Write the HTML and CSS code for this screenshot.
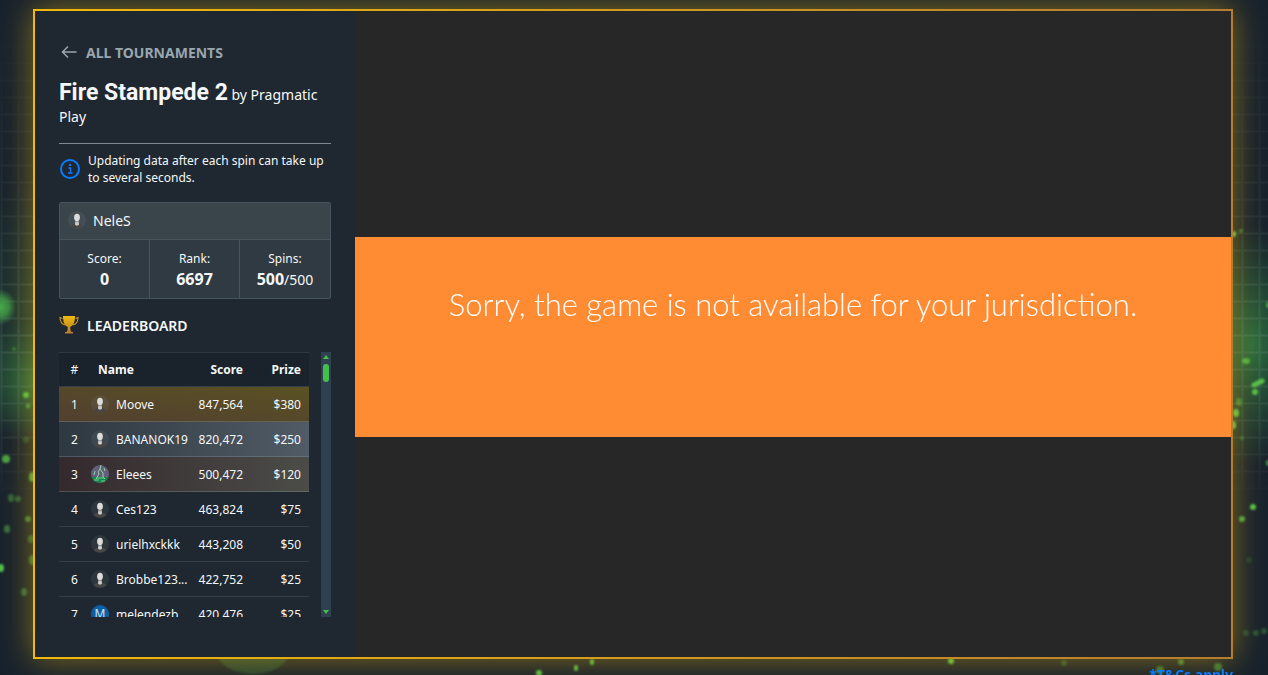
FILE: index.html
```html
<!DOCTYPE html>
<html lang="en">
<head>
    <meta charset="UTF-8">
    <title>Fire Stampede 2</title>
    <link rel="stylesheet" href="styles.css">
</head>
<body>
    <!-- shared icons -->
    <svg class="sprite" aria-hidden="true">
        <symbol id="user" viewBox="0 0 18 18">
            <circle cx="9" cy="9" r="9" fill="#8a929a" fill-opacity=".13"/>
            <path d="M2.6 15.2C4 13.3 6 12.6 9 12.6s5 .7 6.400 2.600A9 9 0 0 1 2.600 15.200z" fill="#484644"/>
            <path d="M7.300 10.200h3.400l.3 3.300-1 .9H8l-1-.9z" fill="#cfcfcf"/>
            <ellipse cx="9" cy="6.400" rx="2.900" ry="3.600" fill="#dcdcdc"/>
            <path d="M7.200 10.800h3.600" stroke="#8d8d8d" stroke-width=".8"/>
        </symbol>
    </svg>

    <!-- page backdrop -->
    <svg class="backdrop" viewBox="0 0 1268 675" preserveAspectRatio="none" aria-hidden="true">
        <defs>
            <pattern id="grid" width="17" height="17" patternUnits="userSpaceOnUse" y="11">
                <path d="M1.500 0v17M0 1.500h17" stroke="#7f9a94" stroke-opacity=".2" stroke-width="2"/>
            </pattern>
            <linearGradient id="fade" x1="0" y1="0" x2="0" y2="1">
                <stop offset="0" stop-color="#000"/>
                <stop offset=".3" stop-color="#777"/>
                <stop offset=".5" stop-color="#fff"/>
                <stop offset=".64" stop-color="#aaa"/>
                <stop offset=".75" stop-color="#000"/>
            </linearGradient>
            <mask id="gridMask"><rect width="1268" height="675" fill="url(#fade)"/></mask>
            <radialGradient id="green">
                <stop offset="0" stop-color="#37a04a" stop-opacity=".6"/>
                <stop offset=".5" stop-color="#2f8245" stop-opacity=".35"/>
                <stop offset="1" stop-color="#2f8245" stop-opacity="0"/>
            </radialGradient>
            <radialGradient id="orb">
                <stop offset="0" stop-color="#45a84a"/>
                <stop offset=".5" stop-color="#3f9c48" stop-opacity=".8"/>
                <stop offset="1" stop-color="#3f9c48" stop-opacity="0"/>
            </radialGradient>
            <filter id="soft" x="-20%" y="-20%" width="140%" height="140%"><feGaussianBlur stdDeviation="1"/></filter>
        </defs>
        <rect width="1268" height="675" fill="#18222d"/>
        <ellipse cx="40" cy="382" rx="70" ry="62" fill="url(#green)"/>
        <ellipse cx="25" cy="310" rx="60" ry="130" fill="url(#green)" opacity=".3"/>
        <ellipse cx="1252" cy="345" rx="70" ry="120" fill="url(#green)"/>
        <rect width="1268" height="675" fill="url(#grid)" mask="url(#gridMask)"/>
        <ellipse cx="1" cy="307" rx="15" ry="18" fill="url(#orb)"/>
        <g fill="#55c24a" filter="url(#soft)">
            <ellipse cx="26" cy="395" rx="3" ry="3"/>
            <ellipse cx="28" cy="406" rx="2" ry="2" opacity=".8"/>
            <ellipse cx="6" cy="459" rx="4" ry="4" opacity=".8"/>
            <ellipse cx="14" cy="349" rx="2" ry="2" opacity=".4"/>
            <ellipse cx="26" cy="440" rx="3" ry="3" opacity=".25"/>
            <ellipse cx="32" cy="477" rx="3" ry="5" opacity=".8"/>
            <ellipse cx="11" cy="498" rx="3" ry="4" opacity=".4"/>
            <ellipse cx="18" cy="499" rx="3" ry="3" opacity=".4"/>
            <ellipse cx="28" cy="519" rx="3" ry="3" opacity=".6"/>
            <ellipse cx="7" cy="529" rx="3" ry="4" opacity=".5"/>
            <ellipse cx="31" cy="539" rx="3" ry="4" opacity=".4"/>
            <ellipse cx="32" cy="560" rx="3" ry="5" opacity=".5"/>
            <ellipse cx="1" cy="568" rx="3" ry="4"/>
            <ellipse cx="24" cy="592" rx="3" ry="4" opacity=".45"/>
            <ellipse cx="253" cy="652" rx="36" ry="22" opacity=".2"/>
            <ellipse cx="592" cy="662" rx="2" ry="3"/>
            <ellipse cx="576" cy="668" rx="2" ry="3"/>
            <ellipse cx="539" cy="673" rx="3" ry="3"/>
            <ellipse cx="951" cy="661" rx="3" ry="3"/>
            <ellipse cx="1064" cy="663" rx="3" ry="3" opacity=".3"/>
            <ellipse cx="1181" cy="662" rx="3" ry="3" opacity=".6"/>
            <ellipse cx="1160" cy="670" rx="4" ry="4" opacity=".5"/>
            <ellipse cx="1218" cy="667" rx="4" ry="4" opacity=".5"/>
            <ellipse cx="1234" cy="234" rx="2" ry="3"/>
            <ellipse cx="1241" cy="231" rx="2" ry="2" opacity=".5"/>
            <ellipse cx="1246" cy="361" rx="4" ry="3" opacity=".8"/>
            <path d="M1254 385l8-4" stroke="#55c24a" stroke-width="5" stroke-linecap="round"/>
            <ellipse cx="1255" cy="392" rx="3" ry="3"/>
            <ellipse cx="1239" cy="402" rx="3" ry="4" opacity=".5"/>
            <ellipse cx="1236" cy="413" rx="3" ry="4"/>
            <ellipse cx="1233" cy="425" rx="3" ry="4"/>
            <ellipse cx="1242" cy="438" rx="2" ry="2" opacity=".4"/>
            <ellipse cx="1268" cy="305" rx="2" ry="3" opacity=".7"/>
            <ellipse cx="1268" cy="463" rx="2" ry="3" opacity=".7"/>
            <ellipse cx="1253" cy="507" rx="3" ry="3"/>
            <ellipse cx="1242" cy="519" rx="3" ry="3" opacity=".8"/>
            <ellipse cx="1249" cy="560" rx="3" ry="3" opacity=".15"/>
            <ellipse cx="1246" cy="633" rx="3" ry="3" opacity=".25"/>
            <ellipse cx="1256" cy="633" rx="3" ry="3" opacity=".3"/>
            <ellipse cx="1264" cy="631" rx="3" ry="3" opacity=".3"/>
        </g>
    </svg>

    <main class="page">
        <div class="frame">
            <aside class="sidebar">
                <a class="back" href="#">
                    <svg width="20" height="20" viewBox="0 0 20 20" fill="none" stroke="#9aa6af" stroke-width="1.500" aria-hidden="true">
                        <path d="M17.500 10H3.500M9 4.500L3.500 10 9 15.500"/>
                    </svg>
                    ALL TOURNAMENTS
                </a>
                <h1 class="title"><strong>Fire Stampede 2</strong> by Pragmatic Play</h1>

                <div class="info">
                    <svg width="22" height="22" viewBox="0 0 22 22" fill="none" aria-hidden="true">
                        <circle cx="11" cy="11" r="9" stroke="#0a7cff" stroke-width="2"/>
                        <path d="M9.500 10h2v5M9 15h4.500" stroke="#0a7cff" stroke-width="1.300"/>
                        <rect x="10" y="6" width="2" height="2" fill="#0a7cff"/>
                    </svg>
                    <p>Updating data after each spin can take up to several seconds.</p>
                </div>

                <section class="player">
                    <div class="player-name">
                        <svg class="avatar"><use href="#user"/></svg>
                        NeleS
                    </div>
                    <dl class="stats">
                        <div class="stat"><dt>Score:</dt><dd><b>0</b></dd></div>
                        <div class="stat"><dt>Rank:</dt><dd><b>6697</b></dd></div>
                        <div class="stat"><dt>Spins:</dt><dd><b>500</b>/500</dd></div>
                    </dl>
                </section>

                <h2 class="board-title">
                    <svg width="20" height="20" viewBox="0 0 20 20" aria-hidden="true">
                        <defs>
                            <linearGradient id="gold" x1="0" y1="0" x2="0" y2="1">
                                <stop offset="0" stop-color="#f0b90b"/>
                                <stop offset="1" stop-color="#b47d30"/>
                            </linearGradient>
                        </defs>
                        <path d="M4 1h12c0 6-1.500 9.500-4.800 11l.3 3.500 1 1.500h1.500v1.500H6V17h1.500l1-1.500.3-3.500C5.500 10.500 4 7 4 1z" fill="url(#gold)"/>
                        <path d="M3.500 3.500L1 2.500c0 4 1.500 6.500 5 7.500M16.500 3.500l2.500-1c0 4-1.500 6.500-5 7.500" fill="none" stroke="#c99320" stroke-width="1.100"/>
                    </svg>
                    LEADERBOARD
                </h2>

                <div class="board">
                    <div class="board-scroll">
                        <table>
                            <thead>
                                <tr><th class="place">#</th><th class="name">Name</th><th class="score">Score</th><th class="prize">Prize</th></tr>
                            </thead>
                            <tbody>
                                <tr class="gold">
                                    <td>1</td>
                                    <td><div class="user"><svg class="avatar"><use href="#user"/></svg>Moove</div></td>
                                    <td>847,564</td><td>$380</td>
                                </tr>
                                <tr class="silver">
                                    <td>2</td>
                                    <td><div class="user"><svg class="avatar"><use href="#user"/></svg>BANANOK19</div></td>
                                    <td>820,472</td><td>$250</td>
                                </tr>
                                <tr class="bronze">
                                    <td>3</td>
                                    <td><div class="user">
                                        <svg class="avatar" viewBox="0 0 18 18">
                                            <circle cx="9" cy="9" r="9" fill="#655d7c"/>
                                            <path d="M.6 12h16.800A9 9 0 0 1 .6 12z" fill="#15874a"/>
                                            <path d="M10 0l-1 4-2 3 1 2-3 5M9 4l3 4v4l2 2M4 6l-1 4M13 3l1 3" fill="none" stroke="#8fd6a5"/>
                                            <path d="M3 15h5M10 16h4M5 13h8" stroke="#6fd08f"/>
                                        </svg>Eleees</div></td>
                                    <td>500,472</td><td>$120</td>
                                </tr>
                                <tr>
                                    <td>4</td>
                                    <td><div class="user"><svg class="avatar"><use href="#user"/></svg>Ces123</div></td>
                                    <td>463,824</td><td>$75</td>
                                </tr>
                                <tr>
                                    <td>5</td>
                                    <td><div class="user"><svg class="avatar"><use href="#user"/></svg>urielhxckkk</div></td>
                                    <td>443,208</td><td>$50</td>
                                </tr>
                                <tr>
                                    <td>6</td>
                                    <td><div class="user"><svg class="avatar"><use href="#user"/></svg>Brobbe123...</div></td>
                                    <td>422,752</td><td>$25</td>
                                </tr>
                                <tr>
                                    <td>7</td>
                                    <td><div class="user"><span class="avatar letter">M</span>melendezb</div></td>
                                    <td>420,476</td><td>$25</td>
                                </tr>
                            </tbody>
                        </table>
                    </div>
                    <div class="scrollbar" aria-hidden="true">
                        <span class="arrow-up"></span>
                        <span class="thumb"></span>
                        <span class="arrow-down"></span>
                    </div>
                </div>
            </aside>

            <section class="game">
                <p class="message">Sorry, the game is not available for your jurisdiction.</p>
            </section>
        </div>
        <a class="terms" href="#">*T&amp;Cs apply</a>
    </main>
</body>
</html>
```
FILE: styles.css
```css
* {
    box-sizing: border-box;
}
body {
    margin: 0;
    height: 100vh;
    overflow: hidden;
    background-color: #18222d;
    color: #f5f7f8;
    font-family: "Noto Sans", "Open Sans", sans-serif;
    font-size: 12px;
}
h1, h2, p, dl, dd {
    margin: 0;
}
.sprite {
    display: none;
}
.backdrop {
    position: fixed;
    top: 0;
    left: 0;
    width: 100%;
    height: 100%;
    z-index: -1;
}
.page {
    display: flex;
    flex-direction: column;
    padding: 9px 35px 0 33px;
}
.frame {
    display: flex;
    height: calc(100vh - 25px);
    border: 2px solid;
    border-image: linear-gradient(to right, #f0b90b, #b47d30) 1;
    box-shadow: 0 0 30px rgba(240, 185, 11, 0.5);
}

/* sidebar */
.sidebar {
    display: flex;
    flex-direction: column;
    flex: 0 0 320px;
    padding: 31px 24px 40px;
    background-color: #1f2830;
}
.back {
    display: flex;
    align-items: center;
    gap: 7px;
    height: 20px;
    color: #9aa6af;
    font-size: 14px;
    font-weight: 700;
    text-decoration: none;
}
.title {
    margin-top: 17px;
    padding-bottom: 16px;
    border-bottom: 1px solid #7d8990;
    font-size: 14px;
    font-weight: 400;
    line-height: 20px;
}
.title strong {
    font-family: Roboto, sans-serif;
    font-size: 23px;
    line-height: 28px;
}
.info {
    display: flex;
    align-items: center;
    gap: 7px;
    margin-top: 8px;
    line-height: 17px;
}
.info svg {
    flex: none;
}
.player {
    margin-top: 16px;
    border: 1px solid #47555f;
    border-radius: 2px;
    background-color: #303a42;
}
.player-name {
    display: flex;
    align-items: center;
    gap: 7px;
    height: 36px;
    padding: 0 8px 2px;
    background-color: #3a444b;
    font-size: 14px;
}
.stats {
    display: grid;
    grid-template-columns: repeat(3, 1fr);
    border-top: 1px solid #47555f;
    text-align: center;
}
.stat {
    height: 58px;
    padding-top: 10px;
    border-right: 1px solid #47555f;
}
.stat:last-child {
    border-right: 0;
}
.stat dt {
    line-height: 17px;
}
.stat dd {
    font-size: 14px;
    line-height: 24px;
}
.stat b {
    font-size: 16px;
}
.board-title {
    display: flex;
    align-items: center;
    gap: 8px;
    height: 20px;
    margin: 16px 0 17px;
    font-size: 14px;
    font-weight: 600;
}

/* leaderboard */
.board {
    display: flex;
    flex: 1;
    gap: 12px;
    min-height: 0;
}
.board-scroll {
    flex: 1;
    overflow: hidden;
}
table {
    width: 100%;
    table-layout: fixed;
    border-spacing: 0;
}
th, td {
    height: 35px;
    padding: 0;
    border-bottom: 1px solid #343f47;
    text-align: right;
    white-space: nowrap;
}
thead tr {
    background-color: #1a232b;
}
th {
    border-top: 1px solid #2d3941;
}
.place {
    width: 31px;
    font-weight: 400;
}
th:first-child, td:first-child {
    text-align: center;
}
.name {
    width: 105px;
    padding-left: 8px;
    text-align: left;
}
.score {
    width: 48px;
}
th:last-child, td:last-child {
    padding-right: 8px;
}
.gold {
    background: linear-gradient(to top right, #513f30, #5a5123);
}
.silver {
    background: linear-gradient(to right, #2e3840, #505b65);
}
.bronze {
    background: linear-gradient(to right, #34292d, #4b4c48);
}
.gold td, .silver td, .bronze td {
    border-bottom-color: rgba(150, 165, 175, 0.3);
}
.user {
    display: flex;
    align-items: center;
    gap: 7px;
    padding-left: 1px;
}
.avatar {
    flex: none;
    width: 18px;
    height: 18px;
}
.letter {
    border-radius: 50%;
    background-color: #0b5fa5;
    color: #cfe4f5;
    line-height: 18px;
    text-align: center;
}
.scrollbar {
    display: flex;
    flex-direction: column;
    align-items: center;
    width: 10px;
    padding: 3px 0;
    background-color: #2f4150;
}
.arrow-up, .arrow-down {
    border: 3px solid transparent;
}
.arrow-up {
    border-top: 0;
    border-bottom: 4px solid #43c04b;
}
.arrow-down {
    margin-top: auto;
    border-top: 4px solid #43c04b;
    border-bottom: 0;
}
.thumb {
    width: 6px;
    height: 18px;
    margin-top: 5px;
    border-radius: 3px;
    background-color: #43c04b;
}

/* game area */
.game {
    display: flex;
    align-items: center;
    flex: 1;
    padding-top: 6px;
    background-color: #272727;
}
.message {
    width: 100%;
    height: 200px;
    padding-top: 47px;
    background-color: #ff8b33;
    color: #fff;
    font-family: "Century Gothic", Lato, sans-serif;
    font-size: 31px;
    font-weight: 300;
    line-height: 40px;
    text-align: center;
}
.terms {
    align-self: flex-end;
    margin-top: 6px;
    color: #0a7cff;
    font-size: 14px;
    font-weight: 700;
    line-height: 20px;
    text-decoration: none;
}
```
